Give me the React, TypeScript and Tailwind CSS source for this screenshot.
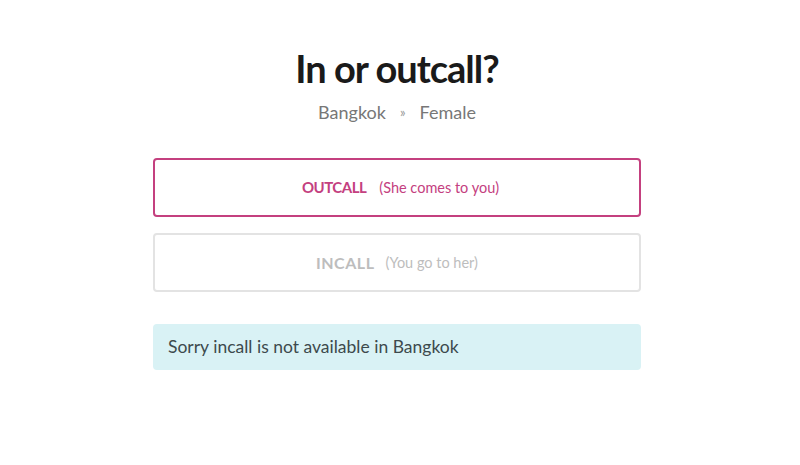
import React from "react";

export default function App() {
  return (
    <div className="w-[800px] h-[465px] bg-white flex flex-col items-center" style={{ fontFamily: "Lato, 'Open Sans', sans-serif" }}>
      <div className="w-[488px] ml-[-6px] flex flex-col items-center">
        <h1 className="mt-[44px] text-[38px] leading-[48px] font-bold tracking-[-1px] text-[#1a1a1a]">In or outcall?</h1>
        <div className="mt-[9px] flex items-center text-[18px] leading-[22px] text-[#777]">
          <span>Bangkok</span>
          <span className="mx-[14px] text-[13px] text-[#999]">»</span>
          <span>Female</span>
        </div>
        <button className="mt-[35px] w-full h-[59px] pl-[7px] rounded-[4px] border-2 border-[#c4407f] bg-white flex items-center justify-center">
          <span className="text-[15px] font-bold tracking-[-0.5px] text-[#c4407f]">OUTCALL</span>
          <span className="ml-[13px] text-[14.5px] text-[#c4407f]">(She comes to you)</span>
        </button>
        <button className="mt-[16px] w-full h-[59px] rounded-[4px] border-2 border-[#e3e3e3] bg-white flex items-center justify-center">
          <span className="text-[16px] font-bold tracking-[0.5px] text-[#bdbdbd]">INCALL</span>
          <span className="ml-[11px] text-[14.5px] text-[#bdbdbd]">(You go to her)</span>
        </button>
        <div className="mt-[32px] w-full h-[46px] rounded-[4px] bg-[#d9f2f5] flex items-center px-[15px] text-[17.5px] text-[#3d4a4d]">
          Sorry incall is not available in Bangkok
        </div>
      </div>
    </div>
  );
}
